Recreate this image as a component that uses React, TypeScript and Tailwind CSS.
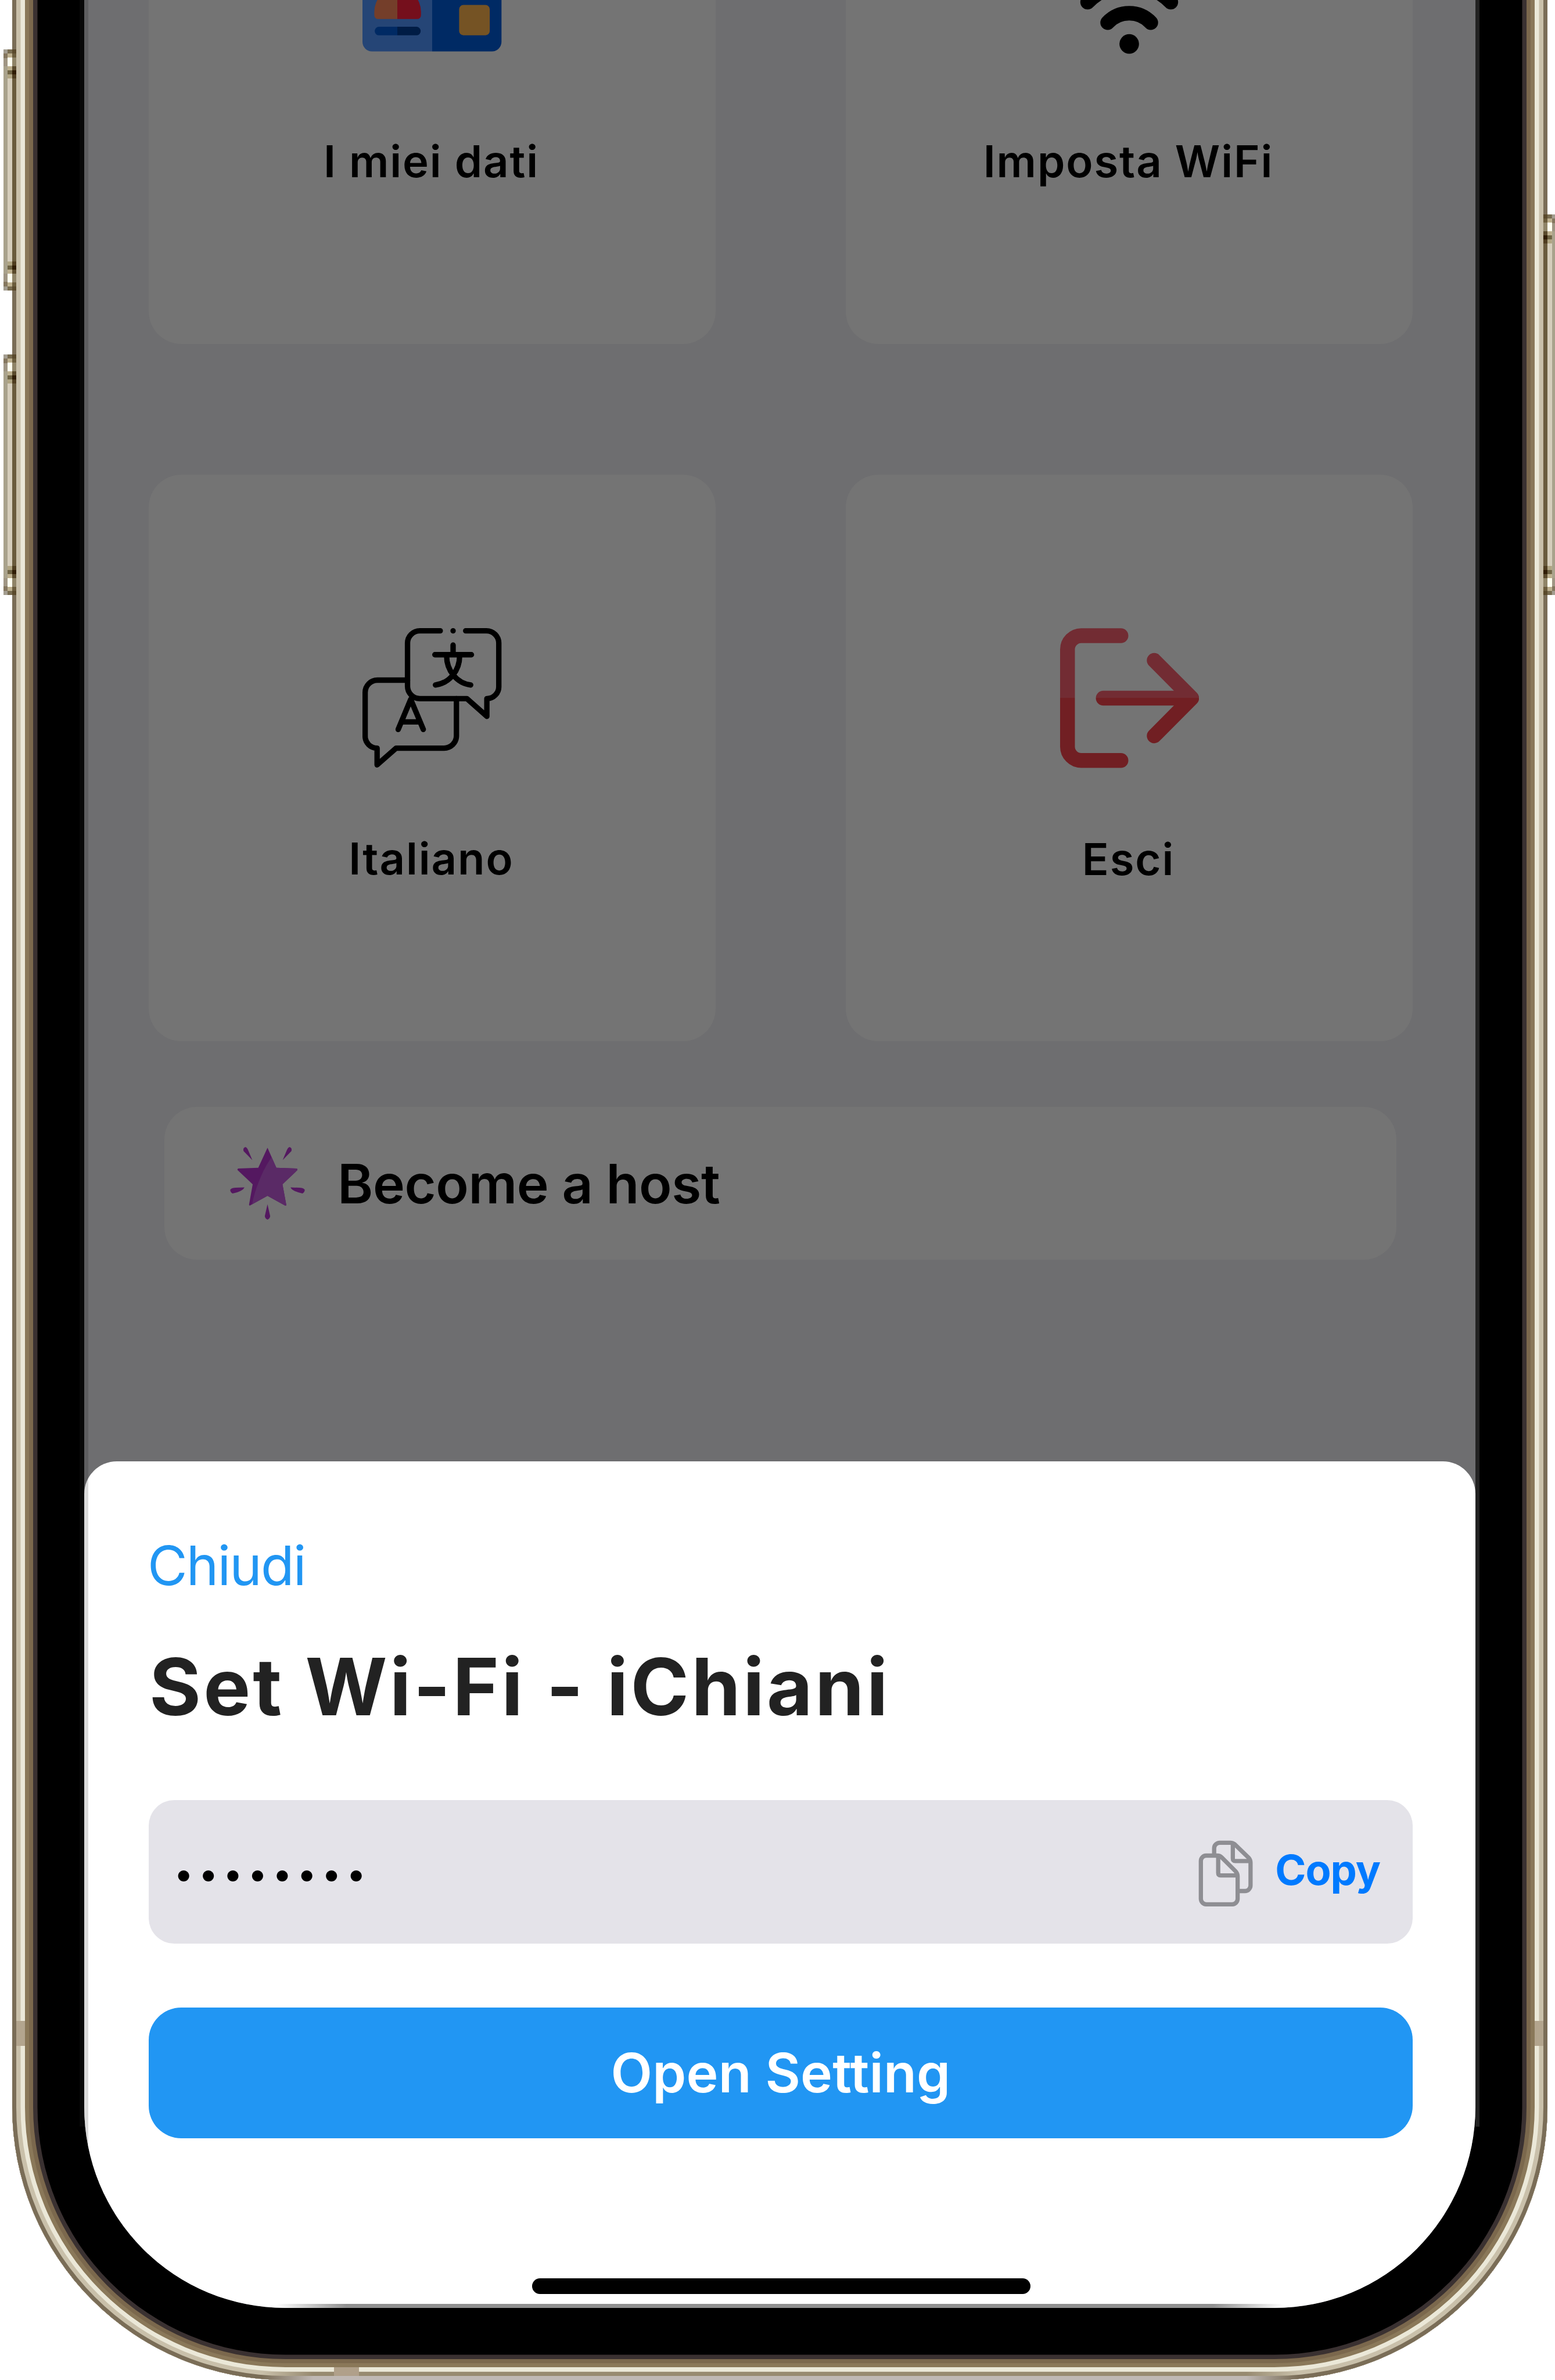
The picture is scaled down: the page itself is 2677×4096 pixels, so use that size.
import React from "react";

type Segment = { size: string; color: string };

const edgeCaps: Segment[] = [
  { size: "h-[7px]", color: "bg-[#a39d90]" },
  { size: "h-[8px]", color: "bg-[#85775f]" },
  { size: "h-[14px]", color: "bg-[#a09684]" },
];
const faceCaps: Segment[] = [
  { size: "h-[7px]", color: "bg-[#786c50]" },
  { size: "h-[7px]", color: "bg-[#bdb08f]" },
  { size: "h-[15px]", color: "bg-[#fffff0]" },
  { size: "h-[7px]", color: "bg-[#bdb08f]" },
  { size: "h-[7px]", color: "bg-[#6f6445]" },
  { size: "h-[7px]", color: "bg-[#b0a583]" },
];
const rootCaps: Segment[] = [
  { size: "h-[7px]", color: "bg-[#5a4a2c]" },
  { size: "h-[7px]", color: "bg-[#6b5c3c]" },
  { size: "h-[15px]", color: "bg-[#8f8467]" },
  { size: "h-[7px]", color: "bg-[#5a4a2c]" },
  { size: "h-[7px]", color: "bg-[#301d05]" },
  { size: "h-[7px]", color: "bg-[#4f3d20]" },
];

function Column({ caps, body }: { caps: Segment[]; body: string }) {
  return (
    <div className="flex h-full w-[7.3px] flex-col">
      {caps.map((c, i) => (
        <div key={i} className={`${c.size} ${c.color} shrink-0`} />
      ))}
      <div className={`grow ${body}`} />
      {[...caps].reverse().map((c, i) => (
        <div key={i} className={`${c.size} ${c.color} shrink-0`} />
      ))}
    </div>
  );
}

function SideButton({ className }: { className: string }) {
  return (
    <div className={`absolute flex ${className}`}>
      <Column caps={edgeCaps} body="bg-[#a9a28c]" />
      <Column caps={faceCaps} body="bg-[#d5cdbb]" />
      <Column caps={rootCaps} body="bg-[#6a5b3d]" />
    </div>
  );
}

function IdCardIcon() {
  return (
    <svg viewBox="0 0 362 362" className="size-[240px]">
      <path d="M181 49H25A25 25 0 0 0 0 74V288A25 25 0 0 0 25 313H181Z" fill="#254576" />
      <path d="M181 49H336A25 25 0 0 1 361 74V288A25 25 0 0 1 336 313H181Z" fill="#002a64" />
      <path d="M90.500 149A60.600 60.600 0 0 0 30.700 210V219A10 10 0 0 0 40.700 229H90.500Z" fill="#743e2a" />
      <path d="M90.500 149A60.600 60.600 0 0 1 152 210V219A10 10 0 0 1 142 229H90.500Z" fill="#750f1c" />
      <path d="M90.500 249H42A11.200 11.200 0 0 0 42 271.300H90.500Z" fill="#002a64" />
      <path d="M90.500 249H141A11.200 11.200 0 0 1 141 271.300H90.500Z" fill="#001c45" />
      <rect x="251" y="192.500" width="79.500" height="78.500" rx="11" fill="#755324" />
    </svg>
  );
}

function WifiIcon() {
  return (
    <svg viewBox="0 0 362 362" className="size-[240px]" fill="none" stroke="#000" strokeWidth="38" strokeLinecap="round">
      <path d="M125 238A77 77 0 0 1 237 238" />
      <path d="M73 185A151 151 0 0 1 289 185" />
      <circle cx="181" cy="293.500" r="25.400" fill="#000" stroke="none" />
    </svg>
  );
}

function TranslateIcon() {
  return (
    <svg viewBox="0 0 362 362" className="size-[240px]" fill="none" stroke="#000" strokeWidth="14" strokeLinecap="round" strokeLinejoin="round">
      <path d="M202 7H149A32 32 0 0 0 117 39V151A32 32 0 0 0 149 183H271L323 229V183A31 31 0 0 0 354 151V39A32 32 0 0 0 322 7H268" />
      <path d="M235.300 7h.01M235.300 44V69M188 69H283" />
      <path d="M218.500 72C218.500 110 245 143 281 147.500M252.300 72C252.300 110 226 143 189.500 147.500" />
      <path d="M117 135H39A32 32 0 0 0 7 167V280A31 31 0 0 0 38 311.500V355L87.500 311.500H212A32 32 0 0 0 244 280V183" />
      <path d="M92.700 263L125.300 185L158 263M102 243.500H149" />
    </svg>
  );
}

function LogoutIcon() {
  return (
    <svg viewBox="0 0 362 364" className="h-[241px] w-[240px]" fill="none" stroke="url(#exit)" strokeWidth="38.500" strokeLinecap="round" strokeLinejoin="round">
      <defs>
        <linearGradient id="exit" gradientUnits="userSpaceOnUse" x1="0" y1="0" x2="0" y2="362">
          <stop offset="0.5" stopColor="#722c33" />
          <stop offset="0.5" stopColor="#711f23" />
        </linearGradient>
      </defs>
      <path d="M159.500 19.500H56A36 36 0 0 0 20.500 55.500V308A36 36 0 0 0 56 344H159.500" />
      <path d="M246 84L343.500 182L246 280" />
      <path d="M113.500 182.010L300 182" />
    </svg>
  );
}

function StarIcon() {
  return (
    <svg viewBox="594 2974 200 195" className="h-[129px] w-[133px]">
      <g fill="#541860">
        <path d="M694 2979L717 3031L770 3033Q773 3035 771 3038L733 3074L743 3128Q742 3130 739 3129L694 3104L649 3129Q646 3130 646 3127L655.500 3074L617 3038Q614 3035 618 3033L670 3031Z" />
        <path d="M654.500 3011L632 2988Q629 2979 637 2977Q641 2979 643 2984ZM733.500 3011L756 2988Q759 2979 751 2977Q747 2979 745 2984Z" />
        <path d="M694 3126L701 3157Q700 3164 694 3166Q688 3164 687 3157Z" />
        <path d="M634 3082Q630 3092 603 3098Q597 3094 597 3088Q602 3083 612 3083ZM754 3082Q758 3092 785 3098Q791 3094 791 3088Q786 3083 776 3083Z" />
      </g>
      <path d="M704.500 3003L717 3031L770 3033Q773 3035 771 3038L733 3074L743 3128Q742 3130 739 3129L694 3104L654 3126Q660 3090 683 3040Q692 3022 704.500 3003Z" fill="#5a2a66" />
    </svg>
  );
}

function CopyIcon() {
  return (
    <svg viewBox="111 176 142 173" className="mt-[5px] h-[114.700px] w-[94.200px]" fill="none" stroke="#8e8e93" strokeWidth="11" strokeLinejoin="round">
      <path d="M131 216H160Q167 216 172 221L207 256Q213 262 213 270V328A14.500 14.500 0 0 1 198.500 342.500H132A14.500 14.500 0 0 1 117.500 328V230A14 14 0 0 1 131 216Z" />
      <path d="M162.500 218V261Q162.500 267.500 169 267.500H212" />
      <path d="M152 213V197A14.500 14.500 0 0 1 166.500 182.500H194Q201 182.500 206 187L241 221Q246.500 227 246.500 235V294A14.500 14.500 0 0 1 232 308H218" />
      <path d="M200.500 185V223Q200.500 230 207 230H245" />
    </svg>
  );
}

function Tile({ icon, label }: { icon: React.ReactNode; label: string }) {
  return (
    <div className="flex h-[975px] w-[976px] flex-col items-center justify-center rounded-[56px] bg-[#747474]">
      {icon}
      <span className="mb-[1px] mr-[3px] mt-[106px] text-[76px] font-semibold leading-[100px] tracking-[1.9px] text-black">{label}</span>
    </div>
  );
}

export default function App() {
  return (
    <div className="relative flex h-[4096px] w-[2677px] overflow-hidden bg-white font-['Inter',sans-serif]">
      {/* Phone body: concentric gold rings around a black bezel */}
      <div className="-mt-[200px] ml-[21px] h-[4296px] w-[2643px] shrink-0 rounded-b-[470px] bg-black px-[124px] pt-[200px] shadow-[inset_0_0_0_7px_#7a6d57,inset_0_0_0_14.500px_#c9c0aa,inset_0_0_0_22px_#ebe8d8,inset_0_0_0_29px_#8a7859,inset_0_0_0_36px_#7b684d,inset_0_0_0_43.500px_#3a3131]">
        <div className="relative flex h-[3972px] w-[2395px] flex-col overflow-hidden rounded-b-[346px] bg-[#6e6e70]">
          <div className="ml-[111px] -mt-[383px] grid w-[2176px] shrink-0 grid-cols-[976px_976px] justify-between gap-y-[225px] self-start">
            <Tile icon={<IdCardIcon />} label="I miei dati" />
            <Tile icon={<WifiIcon />} label="Imposta WiFi" />
            <Tile icon={<TranslateIcon />} label="Italiano" />
            <Tile icon={<LogoutIcon />} label="Esci" />
          </div>
          <div className="ml-[138px] mt-[113px] flex h-[263px] w-[2121px] shrink-0 items-center rounded-[56px] bg-[#747474] pl-[111px]">
            <StarIcon />
            <span className="ml-[54px] text-[93px] font-semibold leading-[120px] tracking-[-0.400px] text-black">Become a host</span>
          </div>

          {/* Bottom sheet */}
          <div className="mt-[347px] flex grow flex-col rounded-t-[56px] bg-white pl-[111px] pr-[108px] pt-[119px]">
            <span className="-ml-[2px] text-[94px] leading-[120px] tracking-[-1.9px] text-[#2196f3]">Chiudi</span>
            <h1 className="ml-px mt-[64px] whitespace-nowrap text-[136px] font-bold leading-[170px] tracking-[4.100px] text-[#222222]">Set Wi-Fi - iChiani</h1>
            <div className="mt-[110px] flex h-[247px] items-center rounded-[44px] bg-[#e4e3e9] pl-[43px] pr-[56px]">
              <span className="mt-[4px] grow text-[61px] leading-[100px] tracking-[8.100px] text-black">••••••••</span>
              <CopyIcon />
              <span className="-mt-[8px] ml-[38px] text-[72px] font-bold leading-[100px] tracking-[-1px] text-[#007aff]">Copy</span>
            </div>
            <div className="mt-[110px] flex h-[225px] items-center justify-center rounded-[56px] bg-[#2196f3]">
              <span className="mb-[2px] text-[93px] font-semibold leading-[120px] tracking-[0.200px] text-white">Open Setting</span>
            </div>
            <div className="ml-[660px] mt-[241px] h-[27px] w-[858px] rounded-full bg-black" />
          </div>

          {/* Glass edge along the bezel */}
          <div className="absolute inset-y-0 left-0 w-[7px] bg-black/14" />
          <div className="absolute inset-x-[330px] bottom-0 h-[7px] bg-[linear-gradient(90deg,transparent,#909090_7%,#909090_93%,transparent)]" />
        </div>
      </div>
      <div className="absolute left-[2540px] top-0 h-[3660px] w-[7px] bg-[#222222]" />
      <div className="absolute left-[137px] top-0 h-[3660px] w-[8px] bg-[#080808]" />

      {/* Flat lower rim */}
      <div className="absolute bottom-[7px] left-[450px] h-[7px] w-[1785px] bg-[linear-gradient(90deg,transparent,#978a70_5%,#978a70_95%,transparent)]" />
      <div className="absolute bottom-0 left-[450px] h-[7px] w-[1785px] bg-[linear-gradient(90deg,transparent,#bfb8b4_5%,#bfb8b4_95%,transparent)]" />
      <div className="absolute bottom-[7px] left-[575px] h-[15px] w-[43px] bg-[#b0a08a]" />
      <div className="absolute left-[28px] top-[3478px] h-[43px] w-[15px] bg-[#b3a58e]" />
      <div className="absolute left-[2642px] top-[3478px] h-[43px] w-[15px] bg-[#b3a58e]" />

      <SideButton className="left-[6px] top-[85px] h-[415px]" />
      <SideButton className="left-[6px] top-[610px] h-[414px]" />
      <SideButton className="left-[2657px] top-[369px] h-[655px] -scale-x-100" />
    </div>
  );
}
